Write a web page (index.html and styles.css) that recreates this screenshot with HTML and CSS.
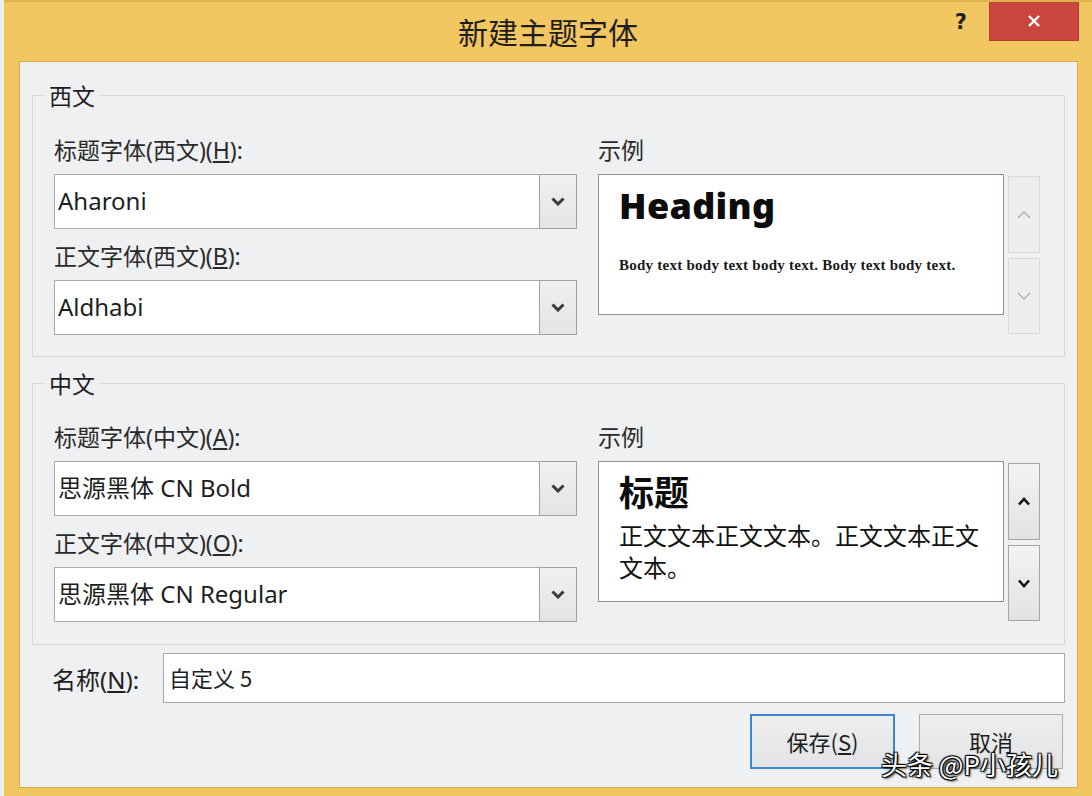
FILE: index.html
```html
<!DOCTYPE html>
<html>
<head>
    <title>新建主题字体</title>
    <link rel="stylesheet" href="styles.css">
</head>
<body>
    <div class="window">
        <div class="titlebar">
            <div></div>
            <div class="title">新建主题字体</div>
            <div class="controls">
                <span class="help">?</span>
                <span class="close">
                    <svg width="16" height="16" viewBox="0 0 16 16"><path d="M3 3 L13 13 M13 3 L3 13" stroke="#fff" stroke-width="2.4" fill="none"/></svg>
                </span>
            </div>
        </div>

        <div class="panel">
            <fieldset class="group">
                <legend>西文</legend>
                <div class="group-body">
                    <div class="fields">
                        <div class="label">标题字体(西文)(<u>H</u>):</div>
                        <div class="combo">
                            <span class="combo-text">Aharoni</span>
                            <span class="combo-btn"><svg width="14" height="9" viewBox="0 0 14 9"><polyline points="1.5,1.5 7,7 12.5,1.5" stroke="#3a3a3a" stroke-width="3" fill="none"/></svg></span>
                        </div>
                        <div class="label">正文字体(西文)(<u>B</u>):</div>
                        <div class="combo">
                            <span class="combo-text">Aldhabi</span>
                            <span class="combo-btn"><svg width="14" height="9" viewBox="0 0 14 9"><polyline points="1.5,1.5 7,7 12.5,1.5" stroke="#3a3a3a" stroke-width="3" fill="none"/></svg></span>
                        </div>
                    </div>
                    <div class="sample">
                        <div class="label">示例</div>
                        <div class="sample-row">
                            <div class="preview preview-latin">
                                <div class="latin-heading">Heading</div>
                                <div class="latin-body">Body text body text body text. Body text body text.</div>
                            </div>
                            <div class="spin spin-off">
                                <span class="spin-btn"><svg width="14" height="8" viewBox="0 0 14 8"><polyline points="1,7 7,1 13,7" stroke="#a5a7a9" stroke-width="1.2" fill="none"/></svg></span>
                                <span class="spin-btn"><svg width="14" height="8" viewBox="0 0 14 8"><polyline points="1,1 7,7 13,1" stroke="#a5a7a9" stroke-width="1.2" fill="none"/></svg></span>
                            </div>
                        </div>
                    </div>
                </div>
            </fieldset>

            <fieldset class="group group-cn">
                <legend>中文</legend>
                <div class="group-body">
                    <div class="fields">
                        <div class="label">标题字体(中文)(<u>A</u>):</div>
                        <div class="combo">
                            <span class="combo-text">思源黑体 CN Bold</span>
                            <span class="combo-btn"><svg width="14" height="9" viewBox="0 0 14 9"><polyline points="1.5,1.5 7,7 12.5,1.5" stroke="#3a3a3a" stroke-width="3" fill="none"/></svg></span>
                        </div>
                        <div class="label">正文字体(中文)(<u>O</u>):</div>
                        <div class="combo">
                            <span class="combo-text">思源黑体 CN Regular</span>
                            <span class="combo-btn"><svg width="14" height="9" viewBox="0 0 14 9"><polyline points="1.5,1.5 7,7 12.5,1.5" stroke="#3a3a3a" stroke-width="3" fill="none"/></svg></span>
                        </div>
                    </div>
                    <div class="sample">
                        <div class="label">示例</div>
                        <div class="sample-row">
                            <div class="preview preview-cn">
                                <div class="cn-heading">标题</div>
                                <div class="cn-body">正文文本正文文本。正文文本正文文本。</div>
                            </div>
                            <div class="spin spin-on">
                                <span class="spin-btn"><svg width="14" height="9" viewBox="0 0 14 9"><polyline points="2,7.5 7,2 12,7.5" stroke="#111" stroke-width="2.6" fill="none"/></svg></span>
                                <span class="spin-btn"><svg width="14" height="9" viewBox="0 0 14 9"><polyline points="2,1.5 7,7 12,1.5" stroke="#111" stroke-width="2.6" fill="none"/></svg></span>
                            </div>
                        </div>
                    </div>
                </div>
            </fieldset>

            <div class="name-row">
                <div class="name-label">名称(<u>N</u>):</div>
                <div class="name-input">自定义 5</div>
            </div>

            <div class="buttons">
                <div class="btn btn-default">保存(<u>S</u>)</div>
                <div class="btn">取消</div>
            </div>
        </div>

        <div class="watermark">头条 @P小孩儿</div>
    </div>
</body>
</html>
```

FILE: styles.css
```css
* {
    margin: 0;
    padding: 0;
    box-sizing: border-box;
}

body {
    font-family: 'Noto Sans', 'Noto Sans CJK SC', sans-serif;
    background-color: #eceef0;
    color: #1a1a1a;
    width: 1092px;
    height: 796px;
    overflow: hidden;
}

.window {
    position: relative;
    width: 1088px;
    height: 796px;
    margin-left: 4px;
    background-color: #f2c661;
    border-top: 2px solid #dfb04e;
}

.titlebar {
    display: grid;
    grid-template-columns: 1fr auto 1fr;
    align-items: start;
    height: 59px;
}

.title {
    font-family: 'Noto Sans CJK SC', sans-serif;
    font-size: 30px;
    line-height: 58px;
    color: #1e1e1e;
}

.controls {
    display: flex;
    justify-content: flex-end;
    align-items: flex-start;
    padding-right: 13px;
}

.help {
    font-family: 'DejaVu Sans', sans-serif;
    font-weight: bold;
    font-size: 21px;
    line-height: 40px;
    color: #222;
    margin-right: 22px;
}

.close {
    width: 90px;
    height: 39px;
    background-color: #c8463e;
    border: 1px solid #b53a33;
    border-top: none;
    display: flex;
    justify-content: center;
    align-items: center;
}

.panel {
    height: 727px;
    margin: 0 14px 0 15px;
    background-color: #eff0f2;
    border: 1px solid #d8aa4c;
    padding: 0 12px 0 12px;
    overflow: hidden;
}

.group {
    border: 1px solid #d7dadd;
    margin-top: 19px;
    padding: 26px 22px 21px 21px;
    min-width: 0;
}

.group-cn {
    margin-top: 12px;
    padding-top: 25px;
    padding-bottom: 22px;
}

.group legend {
    font-family: 'Noto Sans CJK SC', sans-serif;
    font-size: 23px;
    line-height: 28px;
    margin-left: -9px;
    padding: 0 4px;
    color: #1e1e1e;
}

.group-body {
    display: grid;
    grid-template-columns: 523px 1fr;
    column-gap: 21px;
}

.label {
    font-size: 23px;
    line-height: 30px;
    height: 30px;
    margin-bottom: 9px;
    color: #2a2a2a;
    white-space: nowrap;
}

.fields .label:nth-of-type(3) {
    margin-top: 12px;
}

.combo {
    display: flex;
    height: 55px;
    background-color: #fff;
    border: 1px solid #a8aaac;
}

.combo-text {
    flex: 1;
    font-size: 24px;
    line-height: 51px;
    padding-left: 3px;
    color: #1e1e1e;
    white-space: nowrap;
}

.combo-btn {
    width: 38px;
    display: flex;
    justify-content: center;
    align-items: center;
    background: linear-gradient(#f0f0f0, #e3e4e6);
    border: 1px solid #9ea0a2;
    margin: -1px -1px -1px 0;
}

.sample-row {
    display: flex;
    gap: 4px;
    align-items: flex-start;
}

.preview {
    width: 406px;
    height: 141px;
    background-color: #fff;
    border: 1px solid #8d8f91;
    padding: 0 20px;
    overflow: hidden;
}

.latin-heading {
    font-family: 'Noto Sans', sans-serif;
    font-weight: 900;
    font-size: 36px;
    line-height: 40px;
    margin-top: 11px;
    color: #0c0c0c;
    letter-spacing: 0.3px;
}

.latin-body {
    font-family: 'Liberation Serif', serif;
    font-weight: bold;
    font-size: 15px;
    line-height: 18px;
    margin-top: 30px;
    letter-spacing: 0.25px;
    color: #1a1a1a;
    white-space: nowrap;
}

.cn-heading {
    font-family: 'Noto Sans CJK SC', sans-serif;
    font-weight: bold;
    font-size: 35px;
    line-height: 44px;
    margin-top: 7px;
    color: #0c0c0c;
}

.cn-body {
    font-family: 'Noto Sans CJK SC', sans-serif;
    font-size: 24px;
    line-height: 32px;
    margin-top: 6px;
    color: #111;
}

.spin {
    display: flex;
    flex-direction: column;
    gap: 5px;
    margin-top: 2px;
}

.spin-btn {
    width: 32px;
    height: 77px;
    display: flex;
    justify-content: center;
    align-items: center;
}

.spin-btn + .spin-btn {
    height: 76px;
}

.spin-off .spin-btn {
    background-color: #eceef0;
    border: 1px solid #d6d8da;
}

.spin-on .spin-btn {
    background: linear-gradient(#f3f3f3, #e1e2e4);
    border: 1px solid #a3a5a7;
}

.name-row {
    display: flex;
    align-items: center;
    margin-top: 8px;
}

.name-label {
    font-size: 24px;
    width: 131px;
    padding-left: 20px;
    color: #1e1e1e;
    white-space: nowrap;
}

.name-input {
    flex: 1;
    height: 50px;
    background-color: #fff;
    border: 1px solid #a8aaac;
    font-family: 'Noto Sans CJK SC', sans-serif;
    font-size: 22px;
    line-height: 46px;
    padding-left: 5px;
    color: #1e1e1e;
}

.buttons {
    display: flex;
    justify-content: flex-end;
    gap: 24px;
    margin-top: 11px;
    padding-right: 2px;
}

.btn {
    width: 144px;
    height: 55px;
    background: linear-gradient(#eeeeee, #e3e4e6);
    border: 1px solid #acacac;
    font-family: 'Noto Sans CJK SC', sans-serif;
    font-size: 22px;
    line-height: 53px;
    text-align: center;
    color: #1e1e1e;
}

.btn-default {
    width: 145px;
    border: 2px solid #3d84d6;
    line-height: 51px;
}

.watermark {
    position: absolute;
    left: 877px;
    top: 742px;
    font-family: 'Noto Sans CJK SC', sans-serif;
    font-size: 26px;
    line-height: 40px;
    color: #fff;
    text-shadow: 1px 1px 1px #000, -1px -1px 1px #000, 1px -1px 1px #000, -1px 1px 1px #000, 2px 2px 2px rgba(0, 0, 0, 0.6);
}
```
